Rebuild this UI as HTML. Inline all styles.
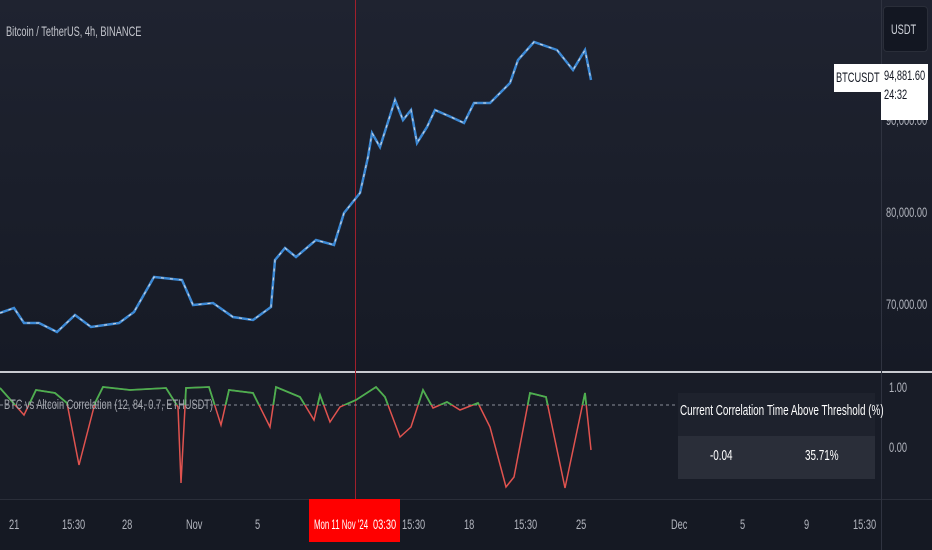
<!DOCTYPE html>
<html><head><meta charset="utf-8"><style>
*{margin:0;padding:0;box-sizing:border-box}
body{width:932px;height:550px;overflow:hidden;background:#161a25;font-family:"Liberation Sans Narrow","Liberation Sans",sans-serif;color:#b2b5be;position:relative}
.t{position:absolute;font-size:13px;white-space:nowrap;transform:scaleX(0.66);transform-origin:0 0}
</style></head><body>
<div style="position:absolute;left:0;top:0;width:932px;height:372px;background:linear-gradient(#1f2330,#161a25)"></div>
<div style="position:absolute;left:0;top:374px;width:932px;height:125px;background:#181c27"></div>
<div style="position:absolute;left:0;top:499px;width:932px;height:51px;background:#151923;border-top:1px solid #2a2e39"></div>
<div style="position:absolute;left:0;top:371px;width:932px;height:2px;background:#c8cad0"></div>
<div style="position:absolute;left:881px;top:0;width:1px;height:550px;background:#2f3340"></div>
<div style="position:absolute;left:355px;top:0;width:1px;height:499px;background:#a0202c"></div>
<svg width="932" height="550" style="position:absolute;left:0;top:0">
<polyline fill="none" stroke="#3d8ad6" stroke-width="2.5" points="0,313 14,308 24,323 39,323 57,332 75,315 91,327 119,323 134,312 154,277 182,280 193,305 213,303 233,317 253,320 271,307 275,260 285,248 296,257 316,240 334,245 344,213 360,193 368,157 372,133 380,147 395,100 403,120 411,110 417,143 427,127 435,110 451,117 464,123 474,103 490,103 510,83 518,60 534,42 557,50 573,70 585,50 591,80"/>
<polyline fill="none" stroke="#d8d8dc" stroke-width="1" stroke-dasharray="3 6" points="0,313 14,308 24,323 39,323 57,332 75,315 91,327 119,323 134,312 154,277 182,280 193,305 213,303 233,317 253,320 271,307 275,260 285,248 296,257 316,240 334,245 344,213 360,193 368,157 372,133 380,147 395,100 403,120 411,110 417,143 427,127 435,110 451,117 464,123 474,103 490,103 510,83 518,60 534,42 557,50 573,70 585,50 591,80"/>
<line x1="0" y1="405" x2="881" y2="405" stroke="#8a8e99" stroke-dasharray="3 3"/>
<defs><clipPath id="c"><rect x="0" y="374" width="881" height="31"/></clipPath></defs>
<polyline fill="none" stroke="#e0534f" stroke-width="1.5" points="0,388 24,415 36,390 55,393 67,403 79,465 95,403 103,387 130,390 166,388 178,407 181,483 186,388 209,387 221,425 229,390 253,393 270,427 276,387 300,397 314,420 320,395 330,422 340,407 356,400 376,387 385,397 400,437 411,427 423,390 433,408 447,402 460,410 478,403 490,427 506,487 514,477 530,393 546,397 565,488 585,393 591,450"/>
<polyline clip-path="url(#c)" fill="none" stroke="#4caf50" stroke-width="1.8" points="0,388 24,415 36,390 55,393 67,403 79,465 95,403 103,387 130,390 166,388 178,407 181,483 186,388 209,387 221,425 229,390 253,393 270,427 276,387 300,397 314,420 320,395 330,422 340,407 356,400 376,387 385,397 400,437 411,427 423,390 433,408 447,402 460,410 478,403 490,427 506,487 514,477 530,393 546,397 565,488 585,393 591,450"/>
</svg>
<div class="t" style="left:6px;top:23px;color:#c3c5cc;font-size:14px">Bitcoin / TetherUS, 4h, BINANCE</div>
<div class="t" style="left:4px;top:396px;color:#a5a8b0;font-size:14px">BTC vs Altcoin Correlation (12, 84, 0.7, ETHUSDT)</div>
<div style="position:absolute;left:678px;top:393px;width:197px;height:43px;background:#1e222d"></div>
<div style="position:absolute;left:678px;top:436px;width:197px;height:43px;background:#2a2e39"></div>
<div class="t" style="left:680px;top:402px;color:#fff;font-size:15px">Current Correlation</div>
<div class="t" style="left:767px;top:402px;color:#fff;font-size:15px">Time Above Threshold (%)</div>
<div class="t" style="left:710px;top:447px;color:#fff;font-size:15px">-0.04</div>
<div class="t" style="left:805px;top:447px;color:#fff;font-size:15px">35.71%</div>
<div style="position:absolute;left:883px;top:6px;width:45px;height:46px;background:#131722;border-radius:4px;border:1px solid #2a2e39"></div>
<div class="t" style="left:891px;top:21px;color:#d1d4dc;font-size:14px">USDT</div>
<div class="t" style="left:886px;top:112px;font-size:14px">90,000.00</div>
<div class="t" style="left:886px;top:204px;font-size:14px">80,000.00</div>
<div class="t" style="left:886px;top:296px;font-size:14px">70,000.00</div>
<div style="position:absolute;left:834px;top:64px;width:48px;height:28px;background:#fff"></div>
<div class="t" style="left:836px;top:69px;color:#131722;font-size:14px">BTCUSDT</div>
<div style="position:absolute;left:881px;top:64px;width:47px;height:56px;background:#fff"></div>
<div class="t" style="left:884px;top:67px;color:#131722;font-size:14px">94,881.60</div>
<div class="t" style="left:884px;top:86px;color:#131722;font-size:14px">24:32</div>
<div class="t" style="left:889px;top:379px;font-size:14px">1.00</div>
<div class="t" style="left:889px;top:439px;font-size:14px">0.00</div>
<div style="position:absolute;left:309px;top:499px;width:91px;height:43px;background:#f00"></div>
<div class="t" style="left:314px;top:516px;color:#fff;font-size:14px;transform:scaleX(0.56)">Mon 11 Nov '24</div>
<div class="t" style="left:373px;top:516px;color:#fff;font-size:14px">03:30</div>
<div class="t" style="left:9px;top:516px;font-size:14px">21</div>
<div class="t" style="left:62px;top:516px;font-size:14px">15:30</div>
<div class="t" style="left:122px;top:516px;font-size:14px">28</div>
<div class="t" style="left:186px;top:516px;font-size:14px">Nov</div>
<div class="t" style="left:255px;top:516px;font-size:14px">5</div>
<div class="t" style="left:402px;top:516px;font-size:14px">15:30</div>
<div class="t" style="left:464px;top:516px;font-size:14px">18</div>
<div class="t" style="left:514px;top:516px;font-size:14px">15:30</div>
<div class="t" style="left:576px;top:516px;font-size:14px">25</div>
<div class="t" style="left:671px;top:516px;font-size:14px">Dec</div>
<div class="t" style="left:740px;top:516px;font-size:14px">5</div>
<div class="t" style="left:804px;top:516px;font-size:14px">9</div>
<div class="t" style="left:853px;top:516px;font-size:14px">15:30</div>
</body></html>
